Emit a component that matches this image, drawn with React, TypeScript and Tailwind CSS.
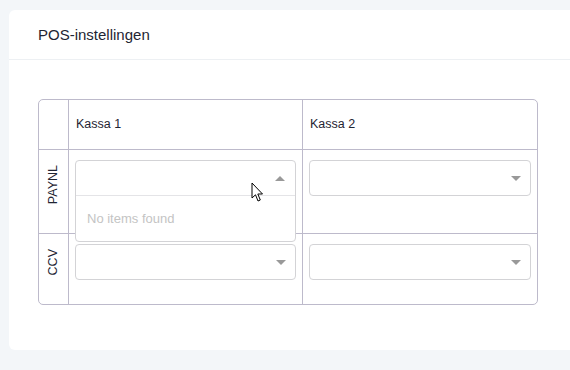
import React from "react";

const line = "border-[#bdbacb]";

function Arrow({ up }: { up?: boolean }) {
  return (
    <svg width="10" height="5" viewBox="0 0 10 5" className="shrink-0">
      <path d={up ? "M0 5 L5 0 L10 5 Z" : "M0 0 L10 0 L5 5 Z"} fill="#999" />
    </svg>
  );
}

function Select() {
  return (
    <div className="h-[36px] w-full rounded-[4px] border border-[#d3d3d6] bg-white flex items-center justify-end pr-[9px]">
      <Arrow />
    </div>
  );
}

function OpenSelect() {
  return (
    <div className="relative h-[36px] w-full">
      <div className="absolute left-0 top-0 z-10 w-full rounded-[4px] border border-[#d3d3d6] bg-white">
        <div className="h-[35px] flex items-center justify-end pr-[10px] border-b border-[#e4e4e7]">
          <Arrow up />
        </div>
        <div className="h-[45px] pl-[11px] flex items-center text-[13px] text-[#c4c4c4]">
          No items found
        </div>
      </div>
      {/* mouse pointer */}
      <svg
        width="14"
        height="21"
        viewBox="0 0 14 21"
        className="absolute left-[176px] top-[22px] z-20"
      >
        <path
          d="M1 1 L1 16 L4.5 12.8 L7 19 L9.3 18 L6.8 12 L11.5 12 Z"
          fill="#fff"
          stroke="#000"
          strokeWidth="1"
          strokeLinejoin="round"
        />
      </svg>
    </div>
  );
}

function Label({ text }: { text: string }) {
  return (
    <div className="w-[29px] shrink-0 flex items-start justify-center pt-[15px]">
      <span className="[writing-mode:vertical-rl] rotate-180 text-[12.5px] leading-none text-[#1f2533]">
        {text}
      </span>
    </div>
  );
}

export default function App() {
  return (
    <div
      className="w-[570px] h-[370px] overflow-hidden bg-[#f3f6f9] pt-[10px] pl-[9px]"
      style={{ fontFamily: '"Liberation Sans", Arial, sans-serif' }}
    >
      <div className="w-[600px] h-[340px] bg-white rounded-l-[6px]">
        <div className="h-[50px] border-b border-[#edf0f3] pl-[29px] flex items-center">
          <h1 className="text-[15px] text-[#1f2533] pt-[1px]">POS-instellingen</h1>
        </div>

        <div className="pt-[39px] pl-[29px]">
          <div className={`w-[500px] rounded-[5px] border ${line} text-[#1f2533]`}>
            <div className="flex h-[49px]">
              <div className="w-[29px] shrink-0" />
              <div className={`w-[234px] border-l ${line} pl-[7px] flex items-center text-[12.5px]`}>
                Kassa 1
              </div>
              <div className={`w-[235px] border-l ${line} pl-[7px] flex items-center text-[12.5px]`}>
                Kassa 2
              </div>
            </div>

            <div className={`flex h-[84px] border-t ${line}`}>
              <Label text="PAYNL" />
              <div className={`w-[234px] border-l ${line} px-[6px] pt-[10px]`}>
                <OpenSelect />
              </div>
              <div className={`w-[235px] border-l ${line} px-[6px] pt-[10px]`}>
                <Select />
              </div>
            </div>

            <div className={`flex h-[71px] border-t ${line}`}>
              <Label text="CCV" />
              <div className={`w-[234px] border-l ${line} px-[6px] pt-[10px]`}>
                <Select />
              </div>
              <div className={`w-[235px] border-l ${line} px-[6px] pt-[10px]`}>
                <Select />
              </div>
            </div>
          </div>
        </div>
      </div>
    </div>
  );
}
